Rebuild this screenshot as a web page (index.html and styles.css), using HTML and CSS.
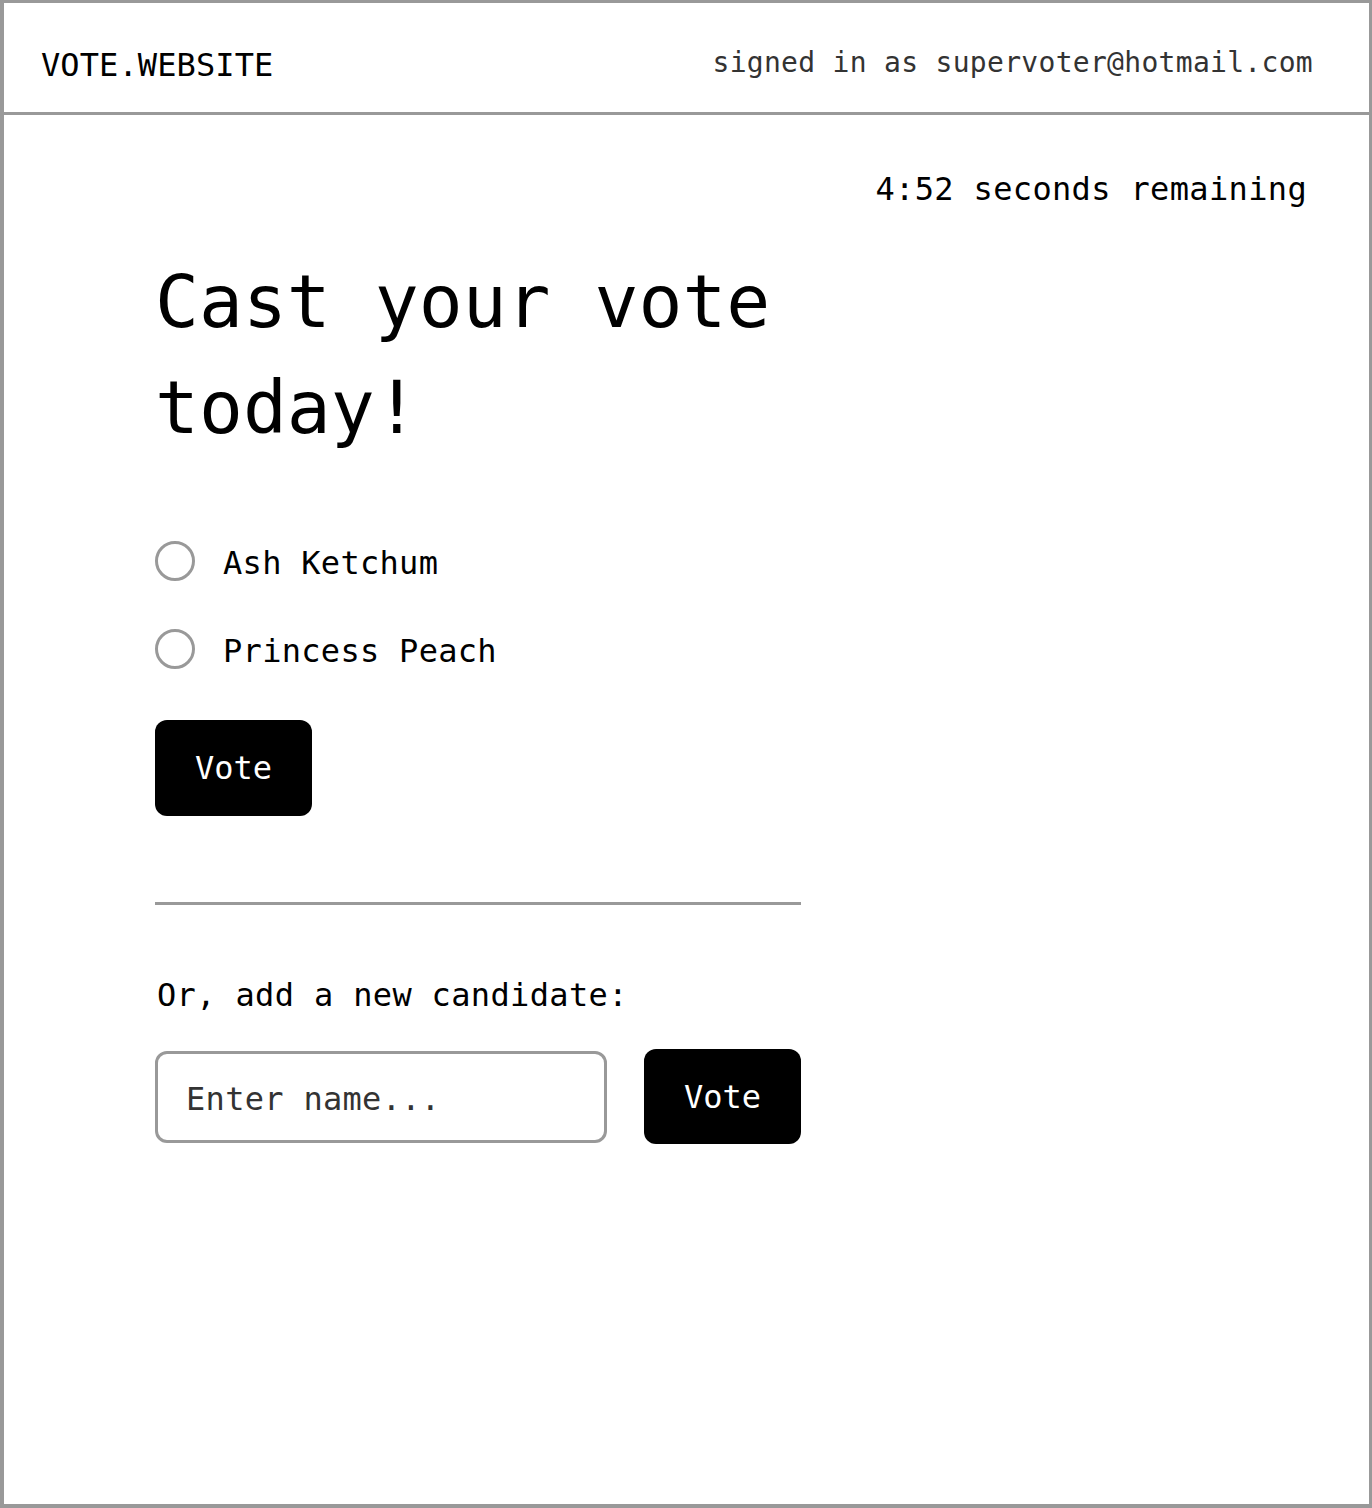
FILE: index.html
```html
<!DOCTYPE html>
<html lang="en">
<head>
<meta charset="utf-8">
<title>VOTE.WEBSITE</title>
<link rel="stylesheet" href="styles.css">
</head>
<body>
<div class="frame">
  <header class="topbar">
    <div class="brand">VOTE.WEBSITE</div>
    <div class="user">signed in as supervoter@hotmail.com</div>
  </header>
  <main class="main">
    <div class="timer">4:52 seconds remaining</div>
    <section class="content">
      <h1 class="title">Cast your vote today!</h1>
      <form class="ballot">
        <label class="option"><input class="radio" type="radio" name="c"><span>Ash Ketchum</span></label>
        <label class="option"><input class="radio" type="radio" name="c"><span>Princess Peach</span></label>
        <button class="btn btn-first" type="button">Vote</button>
      </form>
      <hr class="divider">
      <p class="add-label">Or, add a new candidate:</p>
      <div class="add-row">
        <input class="name-input" type="text" placeholder="Enter name...">
        <button class="btn btn-add" type="button">Vote</button>
      </div>
    </section>
  </main>
</div>
</body>
</html>
```

FILE: styles.css
```css
* { box-sizing: border-box; }
html, body { margin: 0; padding: 0; background: #fff; }
body {
  font-family: "DejaVu Sans Mono", "Liberation Mono", monospace;
  color: #000;
}
.frame {
  border: 3px solid #999;
  border-bottom-width: 4px;
  border-left-width: 4px;
  height: 1508px;
  width: 1372px;
}
.topbar {
  height: 112px;
  border-bottom: 3px solid #999;
  display: flex;
  align-items: center;
  justify-content: space-between;
  padding: 14px 56px 0 37px;
}
.brand {
  font-size: 32px;
  line-height: 40px;
  letter-spacing: 0.1px;
}
.user {
  font-size: 28px;
  line-height: 36px;
  color: #333;
  letter-spacing: 0.3px;
  margin-top: -3px;
}
.main {
  padding: 54px 62px 0 151px;
}
.timer {
  text-align: right;
  font-size: 32px;
  line-height: 40px;
  letter-spacing: 0.35px;
}
.content {
  width: 646px;
}
.title {
  margin: 40px 0 0 0;
  font-size: 73px;
  line-height: 106px;
  font-weight: normal;
  width: 646px;
}
.ballot {
  margin-top: 80px;
  display: flex;
  flex-direction: column;
  align-items: flex-start;
}
.option {
  display: flex;
  align-items: center;
  gap: 28px;
  height: 40px;
  font-size: 32px;
  letter-spacing: 0.3px;
  margin-bottom: 48px;
}
.option span { padding-top: 4px; }
.option:last-of-type { margin-bottom: 51px; }
.radio {
  appearance: none;
  -webkit-appearance: none;
  margin: 0;
  width: 40px;
  height: 40px;
  border: 3px solid #999;
  border-radius: 50%;
  background: #fff;
}
.btn {
  font-family: inherit;
  font-size: 32px;
  color: #fff;
  background: #000;
  border: none;
  border-radius: 12px;
  width: 157px;
  height: 96px;
  padding: 0;
}
.divider {
  margin: 86px 0 0 0;
  border: none;
  height: 3px;
  background: #999;
  width: 646px;
}
.add-label {
  margin: 70px 0 0 0;
  font-size: 32px;
  line-height: 40px;
  padding-left: 2px;
  letter-spacing: 0.35px;
}
.add-row {
  margin-top: 34px;
  display: flex;
  align-items: center;
  gap: 37px;
}
.name-input {
  width: 452px;
  height: 92px;
  border: 3px solid #999;
  border-radius: 12px;
  padding: 5px 0 0 28px;
  font-family: inherit;
  font-size: 32px;
  letter-spacing: 0.3px;
  color: #333;
  outline: none;
}
.name-input::placeholder { color: #333; }
.btn-add { height: 95px; }
```
